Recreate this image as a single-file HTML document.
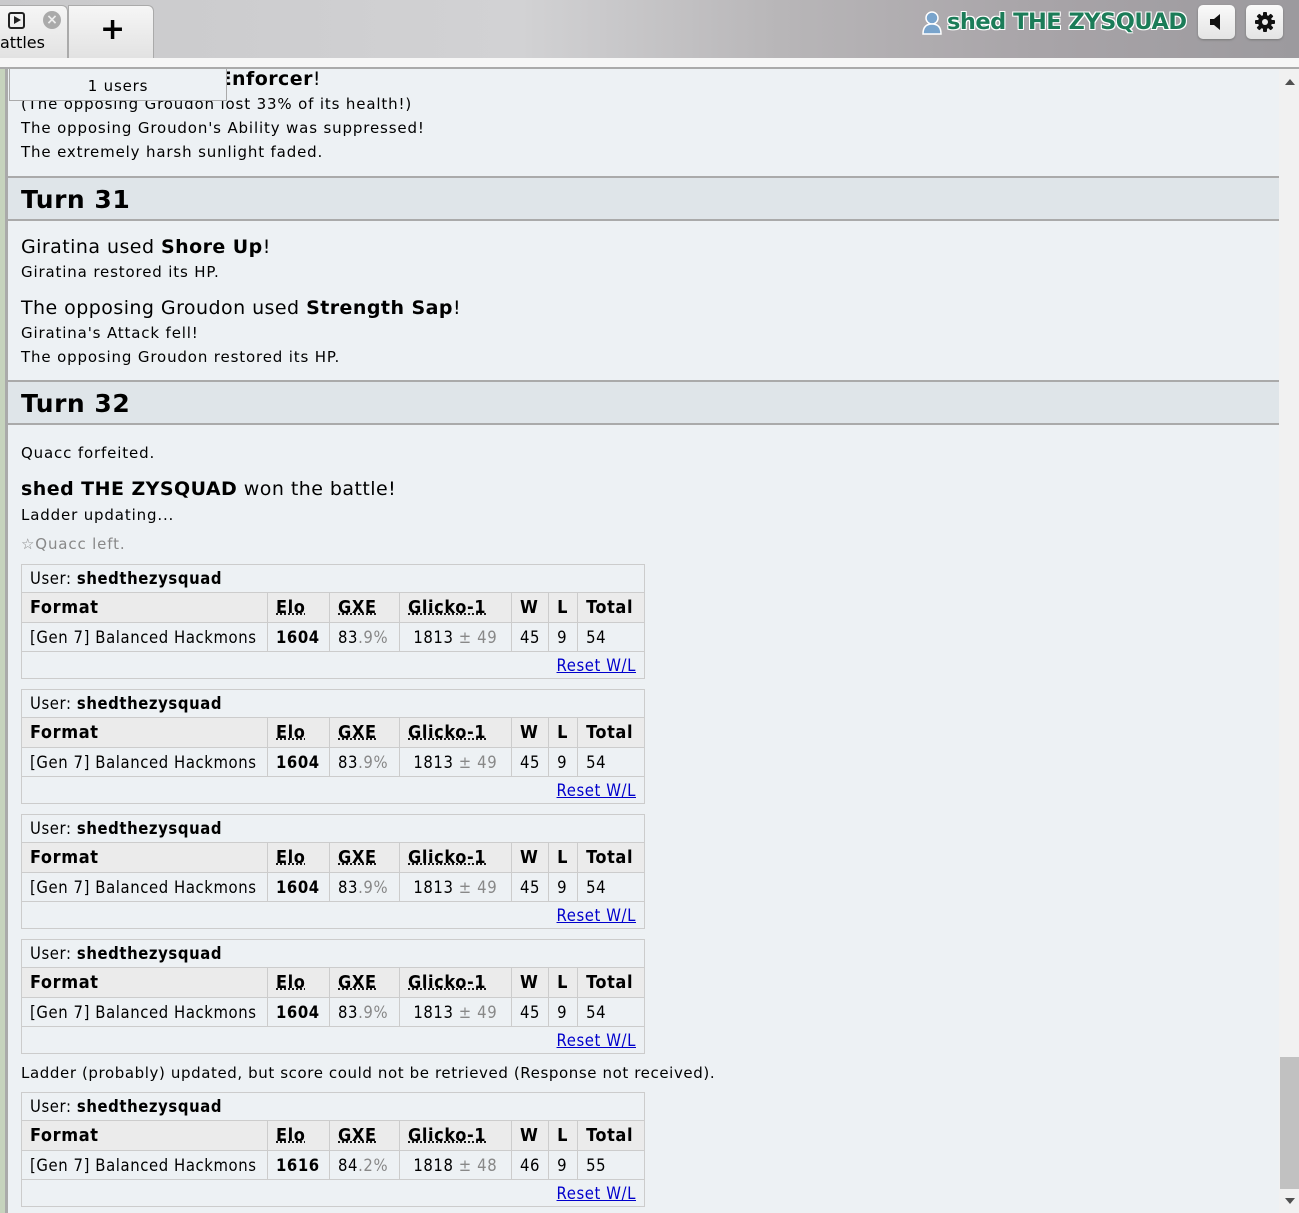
<!DOCTYPE html>
<html><head><meta charset="utf-8"><style>
*{margin:0;padding:0;box-sizing:border-box}
body{width:1299px;height:1213px;overflow:hidden;background:#f1f1f1;font-family:"DejaVu Sans","Liberation Sans",sans-serif;color:#000;position:relative}
.hdr{position:absolute;left:0;top:0;width:1299px;height:58px;background:linear-gradient(90deg,#c9c9cb 0%,#d2d2d4 40%,#b8b6b8 60%,#a8a4a8 80%,#9c9a9e 100%)}
.strip{position:absolute;left:0;top:58px;width:1299px;background:#f6f6f6;border-bottom:2px solid #aaa;height:11px}
.tab{position:absolute;top:5px;height:53px;background:linear-gradient(#f6f6f6,#e2e2e2);border:1px solid #aaa;border-bottom:none;border-radius:0 6px 0 0}
.left{position:absolute;left:0;top:69px;width:8px;height:1144px;background:#c6d3bd;border-right:3px solid #aaa}
.log{position:absolute;left:8px;top:69px;width:1271px;height:1144px;background:#edf1f4}
.sb{position:absolute;left:1280px;top:69px;width:19px;height:1144px;background:#f1f1f1}
.t{position:absolute;left:21px;white-space:nowrap;font-size:15px;line-height:20px;letter-spacing:0.85px}
.b{position:absolute;left:21px;white-space:nowrap;font-size:19px;line-height:24px;letter-spacing:0.45px}
.turn{position:absolute;left:8px;width:1271px;height:45px;background:#dfe5e9;border-top:2px solid #aaa;border-bottom:2px solid #aaa;font-weight:bold;font-size:25px;line-height:43px;padding-left:13px;letter-spacing:0.5px}
table{position:absolute;left:21px;border-collapse:collapse;font-family:"DejaVu Sans Condensed","DejaVu Sans",sans-serif;font-size:16.5px;width:624px;background:#edf1f4;letter-spacing:0.6px}
td,th{border:1px solid #ccc;padding:0 8px;text-align:left;white-space:nowrap}
th{background:#ebebeb;font-size:18px;height:30px}
tr.u td{height:28px;background:#edf1f4;font-size:16.5px}
tr.d td{height:29px}
tr.r td{height:27px;text-align:right}
a{color:#00c;text-decoration:underline}
abbr{text-decoration:underline dotted}
.g{color:#888}
.btn{position:absolute;top:5px;width:37px;height:34px;background:linear-gradient(#fafafa,#e4e4e4);border-radius:5px;box-shadow:0 1px 2px #777}
</style></head><body>
<div class="hdr"></div>
<div class="tab" style="left:-2px;width:70px"></div>
<div style="position:absolute;left:8px;top:12px;width:17px;height:17px;border:2.5px solid #222;border-radius:3px"></div>
<div style="position:absolute;left:14px;top:16px;width:0;height:0;border-left:7px solid #222;border-top:4.5px solid transparent;border-bottom:4.5px solid transparent"></div>
<div style="position:absolute;left:43px;top:11px;width:18px;height:18px;border-radius:50%;background:#aaa;color:#eee;font-size:14px;line-height:18px;text-align:center;font-weight:bold">×</div>
<div style="position:absolute;left:0;top:33px;font-size:16px">attles</div>
<div class="tab" style="left:68px;width:86px"></div>
<div style="position:absolute;left:100px;top:12px;font-size:30px;font-weight:bold;line-height:36px">+</div>
<svg style="position:absolute;left:922px;top:11px" width="20" height="24" viewBox="0 0 20 24"><circle cx="10" cy="7" r="6" fill="#79a4cc" stroke="#fff" stroke-width="1.5"/><path d="M1 23 Q1 13 10 13 Q19 13 19 23 Z" fill="#79a4cc" stroke="#fff" stroke-width="1.5"/></svg>
<div style="position:absolute;left:947px;top:9px;font-size:22.5px;font-weight:bold;color:#1b7c58;font-family:'DejaVu Sans',sans-serif;letter-spacing:-0.5px;text-shadow:1px 1px 0 #fff,-1px -1px 0 #fff,1px -1px 0 #fff,-1px 1px 0 #fff">shed THE ZYSQUAD</div>
<div class="btn" style="left:1198px"></div>
<svg style="position:absolute;left:1209px;top:13px" width="14" height="18"><path d="M1 6h4l6-5v16l-6-5H1z" fill="#111"/></svg>
<div class="btn" style="left:1246px"></div>
<svg style="position:absolute;left:1254px;top:11px" width="22" height="22" viewBox="0 0 22 22"><g fill="#111"><circle cx="11" cy="11" r="7"/><rect x="9" y="1" width="4" height="20" rx="1"/><rect x="1" y="9" width="20" height="4" rx="1"/><rect x="9" y="1" width="4" height="20" rx="1" transform="rotate(45 11 11)"/><rect x="9" y="1" width="4" height="20" rx="1" transform="rotate(-45 11 11)"/></g><circle cx="11" cy="11" r="3" fill="#eee"/></svg>
<div class="strip"></div>
<div class="left"></div>
<div class="log"></div>
<div class="sb"><div style="position:absolute;left:0;top:988px;width:19px;height:132px;background:#c1c1c1"></div>
<div style="position:absolute;left:5px;top:10px;border-bottom:6px solid #505050;border-left:5px solid transparent;border-right:5px solid transparent"></div>
<div style="position:absolute;left:5px;top:1129px;border-top:6px solid #505050;border-left:5px solid transparent;border-right:5px solid transparent"></div></div>

<div class="b" style="top:67px;left:auto;right:978px">Giratina used <b>Core Enforcer</b>!</div>
<div class="t" style="top:94px">(The opposing Groudon lost 33% of its health!)</div>
<div style="position:absolute;left:9px;top:69px;width:218px;height:32px;background:#edf1f4;border:1px solid #aaa;border-top:none;text-align:center;font-size:15px;line-height:34px;letter-spacing:0.8px">1 users</div>
<div class="t" style="top:118px">The opposing Groudon's Ability was suppressed!</div>
<div class="t" style="top:142px">The extremely harsh sunlight faded.</div>
<div class="turn" style="top:176px">Turn 31</div>
<div class="b" style="top:235px">Giratina used <b>Shore Up</b>!</div>
<div class="t" style="top:262px">Giratina restored its HP.</div>
<div class="b" style="top:296px">The opposing Groudon used <b>Strength Sap</b>!</div>
<div class="t" style="top:323px">Giratina's Attack fell!</div>
<div class="t" style="top:347px">The opposing Groudon restored its HP.</div>
<div class="turn" style="top:380px">Turn 32</div>
<div class="t" style="top:443px">Quacc forfeited.</div>
<div class="b" style="top:477px"><b>shed THE ZYSQUAD</b> won the battle!</div>
<div class="t" style="top:505px">Ladder updating...</div>
<div class="t" style="top:534px;color:#888">☆Quacc left.</div>

<table style="top:564px"><tr class="u"><td colspan="7">User: <b>shedthezysquad</b></td></tr><tr><th style="width:246px">Format</th><th style="width:62px"><abbr>Elo</abbr></th><th style="width:70px"><abbr>GXE</abbr></th><th style="width:112px"><abbr>Glicko-1</abbr></th><th style="width:36px">W</th><th style="width:29px">L</th><th>Total</th></tr><tr class="d"><td>[Gen 7] Balanced Hackmons</td><td><b>1604</b></td><td>83<span class="g">.9%</span></td><td>&nbsp;1813<span class="g"> ± 49</span></td><td>45</td><td>9</td><td>54</td></tr><tr class="r"><td colspan="7"><a>Reset W/L</a></td></tr></table>
<table style="top:689px"><tr class="u"><td colspan="7">User: <b>shedthezysquad</b></td></tr><tr><th style="width:246px">Format</th><th style="width:62px"><abbr>Elo</abbr></th><th style="width:70px"><abbr>GXE</abbr></th><th style="width:112px"><abbr>Glicko-1</abbr></th><th style="width:36px">W</th><th style="width:29px">L</th><th>Total</th></tr><tr class="d"><td>[Gen 7] Balanced Hackmons</td><td><b>1604</b></td><td>83<span class="g">.9%</span></td><td>&nbsp;1813<span class="g"> ± 49</span></td><td>45</td><td>9</td><td>54</td></tr><tr class="r"><td colspan="7"><a>Reset W/L</a></td></tr></table>
<table style="top:814px"><tr class="u"><td colspan="7">User: <b>shedthezysquad</b></td></tr><tr><th style="width:246px">Format</th><th style="width:62px"><abbr>Elo</abbr></th><th style="width:70px"><abbr>GXE</abbr></th><th style="width:112px"><abbr>Glicko-1</abbr></th><th style="width:36px">W</th><th style="width:29px">L</th><th>Total</th></tr><tr class="d"><td>[Gen 7] Balanced Hackmons</td><td><b>1604</b></td><td>83<span class="g">.9%</span></td><td>&nbsp;1813<span class="g"> ± 49</span></td><td>45</td><td>9</td><td>54</td></tr><tr class="r"><td colspan="7"><a>Reset W/L</a></td></tr></table>
<table style="top:939px"><tr class="u"><td colspan="7">User: <b>shedthezysquad</b></td></tr><tr><th style="width:246px">Format</th><th style="width:62px"><abbr>Elo</abbr></th><th style="width:70px"><abbr>GXE</abbr></th><th style="width:112px"><abbr>Glicko-1</abbr></th><th style="width:36px">W</th><th style="width:29px">L</th><th>Total</th></tr><tr class="d"><td>[Gen 7] Balanced Hackmons</td><td><b>1604</b></td><td>83<span class="g">.9%</span></td><td>&nbsp;1813<span class="g"> ± 49</span></td><td>45</td><td>9</td><td>54</td></tr><tr class="r"><td colspan="7"><a>Reset W/L</a></td></tr></table>
<div class="t" style="top:1063px;letter-spacing:0.6px">Ladder (probably) updated, but score could not be retrieved (Response not received).</div>
<table style="top:1092px"><tr class="u"><td colspan="7">User: <b>shedthezysquad</b></td></tr><tr><th style="width:246px">Format</th><th style="width:62px"><abbr>Elo</abbr></th><th style="width:70px"><abbr>GXE</abbr></th><th style="width:112px"><abbr>Glicko-1</abbr></th><th style="width:36px">W</th><th style="width:29px">L</th><th>Total</th></tr><tr class="d"><td>[Gen 7] Balanced Hackmons</td><td><b>1616</b></td><td>84<span class="g">.2%</span></td><td>&nbsp;1818<span class="g"> ± 48</span></td><td>46</td><td>9</td><td>55</td></tr><tr class="r"><td colspan="7"><a>Reset W/L</a></td></tr></table>
</body></html>
